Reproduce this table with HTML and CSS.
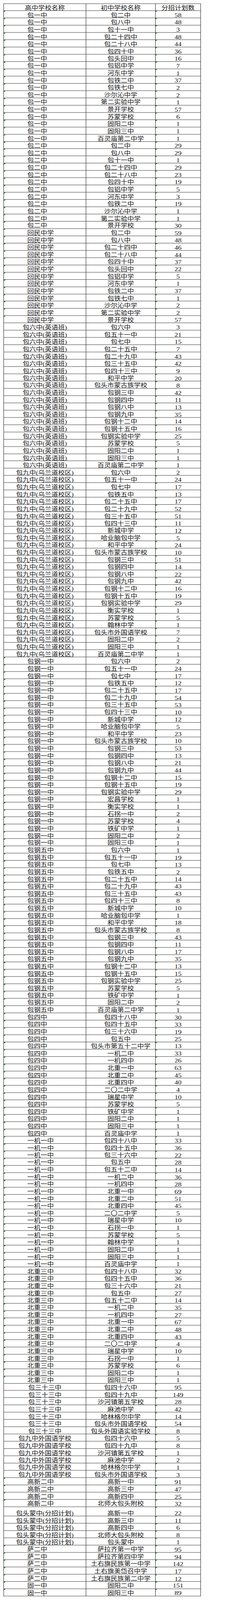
FILE: index.html
```html
<!DOCTYPE html>
<html lang="zh-CN">
<head>
<meta charset="utf-8">
<meta name="viewport" content="width=device-width, initial-scale=1">
<title>分招计划</title>
<link rel="stylesheet" href="styles.css">
</head>
<body>
<div class="sheet">
<table class="plan">
<colgroup><col class="c1"><col class="c2"><col class="c3"></colgroup>
<thead><tr><th>高中学校名称</th><th>初中学校名称</th><th>分招计划数</th></tr></thead>
<tbody class="t">
<tr><td>包一中</td><td>包二中</td><td>58</td></tr>
<tr><td>包一中</td><td>包八中</td><td>48</td></tr>
<tr><td>包一中</td><td>包十一中</td><td>3</td></tr>
<tr><td>包一中</td><td>包二十四中</td><td>48</td></tr>
<tr><td>包一中</td><td>包二十八中</td><td>44</td></tr>
<tr><td>包一中</td><td>包四十中</td><td>36</td></tr>
<tr><td>包一中</td><td>包头回中</td><td>16</td></tr>
<tr><td>包一中</td><td>包铝中学</td><td>7</td></tr>
<tr><td>包一中</td><td>河东中学</td><td>1</td></tr>
<tr><td>包一中</td><td>包铁二中</td><td>37</td></tr>
<tr><td>包一中</td><td>包铁七中</td><td>2</td></tr>
<tr><td>包一中</td><td>沙尔沁中学</td><td>2</td></tr>
<tr><td>包一中</td><td>第二实验中学</td><td>1</td></tr>
<tr><td>包一中</td><td>景开学校</td><td>57</td></tr>
<tr><td>包一中</td><td>苏蒙学校</td><td>6</td></tr>
<tr><td>包一中</td><td>固阳二中</td><td>1</td></tr>
<tr><td>包一中</td><td>固阳三中</td><td>1</td></tr>
<tr><td>包一中</td><td>百灵庙第二中学</td><td>1</td></tr>
</tbody>
<tbody class="t">
<tr><td>包二中</td><td>包二中</td><td>29</td></tr>
<tr><td>包二中</td><td>包八中</td><td>29</td></tr>
<tr><td>包二中</td><td>包十一中</td><td>1</td></tr>
<tr><td>包二中</td><td>包二十四中</td><td>29</td></tr>
<tr><td>包二中</td><td>包二十八中</td><td>23</td></tr>
<tr><td>包二中</td><td>包四十中</td><td>19</td></tr>
<tr><td>包二中</td><td>包铝中学</td><td>5</td></tr>
<tr><td>包二中</td><td>河东中学</td><td>3</td></tr>
<tr><td>包二中</td><td>包铁二中</td><td>19</td></tr>
<tr><td>包二中</td><td>沙尔沁中学</td><td>1</td></tr>
<tr><td>包二中</td><td>第二实验中学</td><td>1</td></tr>
<tr><td>包二中</td><td>景开学校</td><td>30</td></tr>
</tbody>
<tbody class="t">
<tr><td>回民中学</td><td>包二中</td><td>59</td></tr>
<tr><td>回民中学</td><td>包八中</td><td>48</td></tr>
<tr><td>回民中学</td><td>包二十四中</td><td>46</td></tr>
<tr><td>回民中学</td><td>包二十八中</td><td>44</td></tr>
<tr><td>回民中学</td><td>包四十中</td><td>37</td></tr>
<tr><td>回民中学</td><td>包头回中</td><td>22</td></tr>
<tr><td>回民中学</td><td>包铝中学</td><td>5</td></tr>
<tr><td>回民中学</td><td>河东中学</td><td>1</td></tr>
<tr><td>回民中学</td><td>包铁二中</td><td>37</td></tr>
<tr><td>回民中学</td><td>包铁七中</td><td>1</td></tr>
<tr><td>回民中学</td><td>沙尔沁中学</td><td>2</td></tr>
<tr><td>回民中学</td><td>第二实验中学</td><td>2</td></tr>
<tr><td>回民中学</td><td>景开学校</td><td>57</td></tr>
</tbody>
<tbody>
<tr class="x"><td>包六中(英语班)</td><td>包六中</td><td>3</td></tr>
<tr class="x"><td>包六中(英语班)</td><td>包五十一中</td><td>21</td></tr>
<tr class="x"><td>包六中(英语班)</td><td>包七中</td><td>15</td></tr>
<tr class="x"><td>包六中(英语班)</td><td>包二十五中</td><td>7</td></tr>
<tr><td>包六中(英语班)</td><td>包二十九中</td><td>43</td></tr>
<tr><td>包六中(英语班)</td><td>包三十五中</td><td>42</td></tr>
<tr><td>包六中(英语班)</td><td>包四十三中</td><td>9</td></tr>
<tr><td>包六中(英语班)</td><td>和平中学</td><td>20</td></tr>
<tr><td>包六中(英语班)</td><td>包头市蒙古族学校</td><td>8</td></tr>
<tr><td>包六中(英语班)</td><td>包钢三中</td><td>42</td></tr>
<tr><td>包六中(英语班)</td><td>包钢四中</td><td>11</td></tr>
<tr><td>包六中(英语班)</td><td>包钢八中</td><td>13</td></tr>
<tr><td>包六中(英语班)</td><td>包钢九中</td><td>35</td></tr>
<tr><td>包六中(英语班)</td><td>包钢十二中</td><td>14</td></tr>
<tr><td>包六中(英语班)</td><td>包钢十五中</td><td>16</td></tr>
<tr><td>包六中(英语班)</td><td>包钢实验中学</td><td>25</td></tr>
<tr><td>包六中(英语班)</td><td>苏蒙学校</td><td>5</td></tr>
<tr><td>包六中(英语班)</td><td>固阳二中</td><td>1</td></tr>
<tr><td>包六中(英语班)</td><td>固阳三中</td><td>1</td></tr>
<tr><td>包六中(英语班)</td><td>百灵庙第二中学</td><td>1</td></tr>
</tbody>
<tbody>
<tr><td>包九中(乌兰道校区)</td><td>包六中</td><td>2</td></tr>
<tr><td>包九中(乌兰道校区)</td><td>包五十一中</td><td>24</td></tr>
<tr><td>包九中(乌兰道校区)</td><td>包七中</td><td>17</td></tr>
<tr><td>包九中(乌兰道校区)</td><td>包铁五中</td><td>13</td></tr>
<tr><td>包九中(乌兰道校区)</td><td>包二十五中</td><td>17</td></tr>
<tr><td>包九中(乌兰道校区)</td><td>包二十九中</td><td>52</td></tr>
<tr><td>包九中(乌兰道校区)</td><td>包三十五中</td><td>51</td></tr>
<tr><td>包九中(乌兰道校区)</td><td>包四十三中</td><td>11</td></tr>
<tr><td>包九中(乌兰道校区)</td><td>新城中学</td><td>12</td></tr>
<tr><td>包九中(乌兰道校区)</td><td>哈业脑包中学</td><td>5</td></tr>
<tr><td>包九中(乌兰道校区)</td><td>和平中学</td><td>24</td></tr>
<tr><td>包九中(乌兰道校区)</td><td>包头市蒙古族学校</td><td>10</td></tr>
<tr><td>包九中(乌兰道校区)</td><td>包钢三中</td><td>51</td></tr>
<tr><td>包九中(乌兰道校区)</td><td>包钢四中</td><td>14</td></tr>
<tr><td>包九中(乌兰道校区)</td><td>包钢八中</td><td>22</td></tr>
<tr><td>包九中(乌兰道校区)</td><td>包钢九中</td><td>42</td></tr>
<tr><td>包九中(乌兰道校区)</td><td>包钢十二中</td><td>16</td></tr>
<tr><td>包九中(乌兰道校区)</td><td>包钢十五中</td><td>19</td></tr>
<tr><td>包九中(乌兰道校区)</td><td>包钢实验中学</td><td>29</td></tr>
<tr><td>包九中(乌兰道校区)</td><td>衡实学校</td><td>1</td></tr>
<tr><td>包九中(乌兰道校区)</td><td>苏蒙学校</td><td>5</td></tr>
<tr><td>包九中(乌兰道校区)</td><td>翰林中学</td><td>1</td></tr>
<tr><td>包九中(乌兰道校区)</td><td>包头市外国语学校</td><td>7</td></tr>
<tr><td>包九中(乌兰道校区)</td><td>固阳二中</td><td>2</td></tr>
<tr><td>包九中(乌兰道校区)</td><td>固阳三中</td><td>1</td></tr>
<tr><td>包九中(乌兰道校区)</td><td>百灵庙第二中学</td><td>1</td></tr>
</tbody>
<tbody class="t">
<tr><td>包钢一中</td><td>包六中</td><td>2</td></tr>
<tr><td>包钢一中</td><td>包五十一中</td><td>24</td></tr>
<tr><td>包钢一中</td><td>包七中</td><td>17</td></tr>
<tr><td>包钢一中</td><td>包铁五中</td><td>12</td></tr>
<tr><td>包钢一中</td><td>包二十五中</td><td>17</td></tr>
<tr><td>包钢一中</td><td>包二十九中</td><td>54</td></tr>
<tr><td>包钢一中</td><td>包三十五中</td><td>53</td></tr>
<tr><td>包钢一中</td><td>包四十三中</td><td>10</td></tr>
<tr><td>包钢一中</td><td>新城中学</td><td>12</td></tr>
<tr><td>包钢一中</td><td>哈业脑包中学</td><td>5</td></tr>
<tr><td>包钢一中</td><td>和平中学</td><td>23</td></tr>
<tr><td>包钢一中</td><td>包头市蒙古族学校</td><td>10</td></tr>
<tr><td>包钢一中</td><td>包钢三中</td><td>53</td></tr>
<tr><td>包钢一中</td><td>包钢四中</td><td>13</td></tr>
<tr><td>包钢一中</td><td>包钢八中</td><td>21</td></tr>
<tr><td>包钢一中</td><td>包钢九中</td><td>44</td></tr>
<tr><td>包钢一中</td><td>包钢十二中</td><td>15</td></tr>
<tr><td>包钢一中</td><td>包钢十五中</td><td>19</td></tr>
<tr><td>包钢一中</td><td>包钢实验中学</td><td>29</td></tr>
<tr><td>包钢一中</td><td>宏昌学校</td><td>1</td></tr>
<tr><td>包钢一中</td><td>衡实学校</td><td>1</td></tr>
<tr><td>包钢一中</td><td>石拐一中</td><td>2</td></tr>
<tr><td>包钢一中</td><td>苏蒙学校</td><td>4</td></tr>
<tr><td>包钢一中</td><td>铁矿中学</td><td>1</td></tr>
<tr><td>包钢一中</td><td>固阳二中</td><td>2</td></tr>
<tr><td>包钢一中</td><td>固阳三中</td><td>1</td></tr>
</tbody>
<tbody class="t">
<tr><td>包钢五中</td><td>包六中</td><td>1</td></tr>
<tr><td>包钢五中</td><td>包五十一中</td><td>19</td></tr>
<tr><td>包钢五中</td><td>包七中</td><td>13</td></tr>
<tr><td>包钢五中</td><td>包铁五中</td><td>2</td></tr>
<tr><td>包钢五中</td><td>包二十五中</td><td>14</td></tr>
<tr><td>包钢五中</td><td>包二十九中</td><td>43</td></tr>
<tr><td>包钢五中</td><td>包三十五中</td><td>43</td></tr>
<tr><td>包钢五中</td><td>包四十三中</td><td>8</td></tr>
<tr><td>包钢五中</td><td>新城中学</td><td>10</td></tr>
<tr><td>包钢五中</td><td>哈业脑包中学</td><td>1</td></tr>
<tr><td>包钢五中</td><td>和平中学</td><td>18</td></tr>
<tr><td>包钢五中</td><td>包头市蒙古族学校</td><td>8</td></tr>
<tr><td>包钢五中</td><td>包钢三中</td><td>43</td></tr>
<tr><td>包钢五中</td><td>包钢四中</td><td>11</td></tr>
<tr><td>包钢五中</td><td>包钢八中</td><td>17</td></tr>
<tr><td>包钢五中</td><td>包钢九中</td><td>35</td></tr>
<tr><td>包钢五中</td><td>包钢十二中</td><td>13</td></tr>
<tr><td>包钢五中</td><td>包钢十五中</td><td>15</td></tr>
<tr><td>包钢五中</td><td>包钢实验中学</td><td>25</td></tr>
<tr><td>包钢五中</td><td>苏蒙学校</td><td>5</td></tr>
<tr><td>包钢五中</td><td>铁矿中学</td><td>1</td></tr>
<tr><td>包钢五中</td><td>固阳二中</td><td>2</td></tr>
<tr><td>包钢五中</td><td>百灵庙第二中学</td><td>1</td></tr>
</tbody>
<tbody class="t">
<tr><td>包四中</td><td>包四十八中</td><td>30</td></tr>
<tr><td>包四中</td><td>包四十五中</td><td>33</td></tr>
<tr><td>包四中</td><td>包三十六中</td><td>19</td></tr>
<tr><td>包四中</td><td>包五中</td><td>25</td></tr>
<tr><td>包四中</td><td>包头市第五十二中学</td><td>13</td></tr>
<tr><td>包四中</td><td>一机二中</td><td>33</td></tr>
<tr><td>包四中</td><td>一机四中</td><td>26</td></tr>
<tr><td>包四中</td><td>北重一中</td><td>63</td></tr>
<tr><td>包四中</td><td>北重二中</td><td>45</td></tr>
<tr><td>包四中</td><td>北重四中</td><td>40</td></tr>
<tr><td>包四中</td><td>二〇二中学</td><td>4</td></tr>
<tr><td>包四中</td><td>瑞星中学</td><td>10</td></tr>
<tr><td>包四中</td><td>苏蒙学校</td><td>5</td></tr>
<tr><td>包四中</td><td>铁矿中学</td><td>1</td></tr>
<tr><td>包四中</td><td>固阳二中</td><td>1</td></tr>
<tr><td>包四中</td><td>固阳三中</td><td>1</td></tr>
<tr><td>包四中</td><td>百灵庙中学</td><td>1</td></tr>
</tbody>
<tbody class="t">
<tr><td>一机一中</td><td>包四十八中</td><td>33</td></tr>
<tr><td>一机一中</td><td>包四十五中</td><td>36</td></tr>
<tr><td>一机一中</td><td>包三十六中</td><td>22</td></tr>
<tr><td>一机一中</td><td>包五中</td><td>28</td></tr>
<tr><td>一机一中</td><td>包五十二中</td><td>14</td></tr>
<tr><td>一机一中</td><td>一机二中</td><td>36</td></tr>
<tr><td>一机一中</td><td>一机四中</td><td>28</td></tr>
<tr><td>一机一中</td><td>北重一中</td><td>69</td></tr>
<tr><td>一机一中</td><td>北重二中</td><td>51</td></tr>
<tr><td>一机一中</td><td>北重四中</td><td>45</td></tr>
<tr><td>一机一中</td><td>二〇二中学</td><td>5</td></tr>
<tr><td>一机一中</td><td>瑞星中学</td><td>10</td></tr>
<tr><td>一机一中</td><td>石拐一中</td><td>1</td></tr>
<tr><td>一机一中</td><td>苏蒙学校</td><td>5</td></tr>
<tr><td>一机一中</td><td>翰林中学</td><td>1</td></tr>
<tr><td>一机一中</td><td>固阳二中</td><td>1</td></tr>
<tr><td>一机一中</td><td>固阳三中</td><td>1</td></tr>
<tr><td>一机一中</td><td>百灵庙中学</td><td>1</td></tr>
</tbody>
<tbody class="t">
<tr><td>北重三中</td><td>包四十八中</td><td>32</td></tr>
<tr><td>北重三中</td><td>包四十五中</td><td>36</td></tr>
<tr><td>北重三中</td><td>包三十六中</td><td>21</td></tr>
<tr><td>北重三中</td><td>包五中</td><td>27</td></tr>
<tr><td>北重三中</td><td>包五十二中</td><td>14</td></tr>
<tr><td>北重三中</td><td>一机二中</td><td>35</td></tr>
<tr><td>北重三中</td><td>一机四中</td><td>27</td></tr>
<tr><td>北重三中</td><td>北重一中</td><td>67</td></tr>
<tr><td>北重三中</td><td>北重二中</td><td>48</td></tr>
<tr><td>北重三中</td><td>北重四中</td><td>43</td></tr>
<tr><td>北重三中</td><td>二〇二中学</td><td>4</td></tr>
<tr><td>北重三中</td><td>瑞星中学</td><td>10</td></tr>
<tr><td>北重三中</td><td>石拐一中</td><td>1</td></tr>
<tr><td>北重三中</td><td>苏蒙学校</td><td>6</td></tr>
<tr><td>北重三中</td><td>固阳二中</td><td>1</td></tr>
<tr><td>北重三中</td><td>固阳三中</td><td>1</td></tr>
</tbody>
<tbody>
<tr><td>包三十三中</td><td>包四十六中</td><td>95</td></tr>
<tr><td>包三十三中</td><td>包四十九中</td><td>149</td></tr>
<tr><td>包三十三中</td><td>沙河镇第五学校</td><td>28</td></tr>
<tr><td>包三十三中</td><td>麻池中学</td><td>42</td></tr>
<tr><td>包三十三中</td><td>哈林格尔中学</td><td>14</td></tr>
<tr><td>包三十三中</td><td>包头市外国语学校</td><td>54</td></tr>
<tr><td>包三十三中</td><td>包头外国语实验学校</td><td>8</td></tr>
</tbody>
<tbody>
<tr><td>包九中外国语学校</td><td>包四十六中</td><td>5</td></tr>
<tr><td>包九中外国语学校</td><td>包四十九中</td><td>8</td></tr>
<tr><td>包九中外国语学校</td><td>沙河镇第五学校</td><td>1</td></tr>
<tr><td>包九中外国语学校</td><td>麻池中学</td><td>2</td></tr>
<tr><td>包九中外国语学校</td><td>哈林格尔中学</td><td>1</td></tr>
<tr><td>包九中外国语学校</td><td>包头市外国语学校</td><td>3</td></tr>
</tbody>
<tbody class="t">
<tr><td>高新二中</td><td>高新一中</td><td>91</td></tr>
<tr><td>高新二中</td><td>高新三中</td><td>47</td></tr>
<tr><td>高新二中</td><td>高新四中</td><td>25</td></tr>
<tr><td>高新二中</td><td>北师大包头附校</td><td>32</td></tr>
</tbody>
<tbody>
<tr class="tall"><td>包头蒙中(分招计划)</td><td>高新一中</td><td>22</td></tr>
<tr><td>包头蒙中(分招计划)</td><td>高新三中</td><td>11</td></tr>
<tr><td>包头蒙中(分招计划)</td><td>高新四中</td><td>6</td></tr>
<tr><td>包头蒙中(分招计划)</td><td>北师大包头附校</td><td>8</td></tr>
<tr><td>包头蒙中(分招计划)</td><td>包头蒙中</td><td>1</td></tr>
</tbody>
<tbody class="t">
<tr><td>萨二中</td><td>萨拉齐第一中学</td><td>95</td></tr>
<tr><td>萨二中</td><td>萨拉齐第四中学</td><td>94</td></tr>
<tr><td>萨二中</td><td>土右旗民族第一中学</td><td>142</td></tr>
<tr><td>萨二中</td><td>土右旗美岱召中学</td><td>17</td></tr>
<tr><td>萨二中</td><td>土右旗民族第二中学</td><td>12</td></tr>
</tbody>
<tbody class="t">
<tr><td>固一中</td><td>固阳二中</td><td>151</td></tr>
<tr><td>固一中</td><td>固阳三中</td><td>89</td></tr>
</tbody>
</table>
</div>
</body>
</html>
```
FILE: styles.css
```css
html {
  -webkit-text-size-adjust: 100%;
  text-size-adjust: 100%;
}

html, body {
  margin: 0;
  padding: 0;
  background: #fff;
}

/* the sheet holds the table's visual (transformed) height */
.sheet {
  height: 4090px;
  overflow: hidden;
}

/*
  The capture maps 4096 CSS px of height onto the 5659 px frame,
  so vertical sizes are pre-divided by 1.3816; the extra 1.17 gives
  the tall glyphs of the reference.
*/
.plan {
  border-collapse: collapse;
  table-layout: fixed;
  width: 505px;
  margin: 8.7px 0 0 9px;
  font-family: "Liberation Serif", "Noto Sans CJK SC", serif;
  font-size: 17px;
  color: #111;
  transform: scaleY(0.8468);
  transform-origin: 0 0;
}

.plan .c1 { width: 211px; }
.plan .c2 { width: 178px; }
.plan .c3 { width: 116px; }

.plan tr { height: 21.966px; }
.plan thead tr { height: 21.37px; }
.plan tr.tall { height: 28.46px; }

.plan th,
.plan td {
  border: 1px solid #161616;
  padding: 0;
  text-align: center;
  vertical-align: bottom;
  line-height: 15.5px;
  white-space: nowrap;
  font-weight: normal;
  position: relative;
}

.plan td:last-child {
  font-size: 18px;
  line-height: 16.2px;
}

/* text-format cells: left-aligned with Excel's green corner marker */
.plan .t td:first-child {
  text-align: left;
  padding-left: 60px;
}

.plan .t td:first-child::before,
.plan td:last-child::before {
  content: "";
  position: absolute;
  top: 0;
  left: 0;
  width: 0;
  height: 0;
  border-top: 4px solid #1f8a1f;
  border-right: 5px solid transparent;
}

.plan tr.x td:last-child::before {
  display: none;
}
```
